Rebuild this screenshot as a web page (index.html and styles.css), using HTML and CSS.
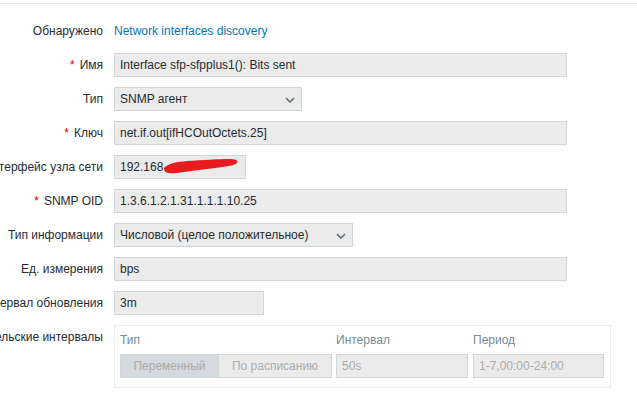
FILE: index.html
```html
<!DOCTYPE html>
<html lang="ru">
<head>
    <meta charset="UTF-8">
    <title>Элемент данных</title>
    <link rel="stylesheet" href="styles.css">
</head>
<body>
    <div class="topbar"></div>
    <div class="form">
        <div class="label">Обнаружено</div>
        <div class="value"><a class="link" href="#">Network interfaces discovery</a></div>

        <div class="label"><span class="req">*</span>Имя</div>
        <div class="value"><div class="field wide">Interface sfp-sfpplus1(): Bits sent</div></div>

        <div class="label">Тип</div>
        <div class="value">
            <div class="field select type-select">SNMP агент
                <svg class="chevron" width="10" height="6" viewBox="0 0 10 6"><path d="M1 1 L5 5 L9 1" fill="none" stroke="#5d6d77" stroke-width="1.6"/></svg>
            </div>
        </div>

        <div class="label"><span class="req">*</span>Ключ</div>
        <div class="value"><div class="field wide">net.if.out[ifHCOutOctets.25]</div></div>

        <div class="label">Интерфейс узла сети</div>
        <div class="value">
            <div class="field iface">192.168.
                <svg class="scribble" width="80" height="20" viewBox="0 0 80 20"><path d="M1 11 C6 6 14 5 24 4 C40 3 56 2 66 2 C72 2 76 3 74 6 C72 8 66 9 60 10 C44 12 28 14 14 16 C6 17 1 16 1 11 Z" fill="#e81c1f"/></svg>
            </div>
        </div>

        <div class="label"><span class="req">*</span>SNMP OID</div>
        <div class="value"><div class="field wide">1.3.6.1.2.1.31.1.1.1.10.25</div></div>

        <div class="label">Тип информации</div>
        <div class="value">
            <div class="field select info-select">Числовой (целое положительное)
                <svg class="chevron" width="10" height="6" viewBox="0 0 10 6"><path d="M1 1 L5 5 L9 1" fill="none" stroke="#5d6d77" stroke-width="1.6"/></svg>
            </div>
        </div>

        <div class="label">Ед. измерения</div>
        <div class="value"><div class="field wide">bps</div></div>

        <div class="label">Интервал обновления</div>
        <div class="value"><div class="field interval">3m</div></div>

        <div class="label">Пользовательские интервалы</div>
        <div class="value">
            <div class="intervals">
                <div class="col-head">Тип</div>
                <div class="col-head">Интервал</div>
                <div class="col-head">Период</div>
                <div class="toggle">
                    <span class="toggle-btn active">Переменный</span>
                    <span class="toggle-btn">По расписанию</span>
                </div>
                <div class="field disabled">50s</div>
                <div class="field disabled">1-7,00:00-24:00</div>
            </div>
        </div>
    </div>
</body>
</html>
```

FILE: styles.css
```css
body {
    margin: 0;
    font-family: 'Liberation Sans', Arial, sans-serif;
    font-size: 12px;
    color: #1f2c33;
    background-color: #fff;
    overflow: hidden;
}
.topbar {
    height: 3px;
    border-bottom: 1px solid #e6e6e6;
}
.form {
    display: grid;
    grid-template-columns: 103px 1fr;
    column-gap: 11px;
    row-gap: 10px;
    padding-top: 15px;
}
.label {
    display: flex;
    justify-content: flex-end;
    align-items: center;
    height: 24px;
    white-space: nowrap;
}
.req {
    color: #d40000;
    margin-right: 5px;
}
.value {
    display: flex;
    align-items: center;
    min-height: 24px;
}
.link {
    color: #0275b8;
    text-decoration: none;
}
.field {
    box-sizing: border-box;
    height: 24px;
    line-height: 22px;
    padding: 0 5px;
    background-color: #ebebeb;
    border: 1px solid #d0d7db;
    white-space: nowrap;
    position: relative;
}
.wide {
    width: 453px;
}
.type-select {
    width: 188px;
}
.info-select {
    width: 239px;
}
.iface {
    width: 132px;
}
.interval {
    width: 150px;
}
.chevron {
    position: absolute;
    right: 6px;
    top: 9px;
}
.scribble {
    position: absolute;
    left: 48px;
    top: 1px;
}
.intervals {
    box-sizing: border-box;
    width: 497px;
    height: 63px;
    border: 1px solid #ebebeb;
    padding: 6px 5px 10px 5px;
    display: grid;
    grid-template-columns: 212px 132px 132px;
    column-gap: 4px;
    row-gap: 6px;
}
.intervals .col-head:nth-child(3),
.intervals .field:last-child {
    margin-left: 1px;
}
.col-head {
    color: #768d99;
    line-height: 16px;
}
.toggle {
    display: flex;
    height: 24px;
}
.toggle-btn {
    box-sizing: border-box;
    height: 24px;
    line-height: 22px;
    text-align: center;
    color: #acacac;
    background-color: #ebebeb;
    border: 1px solid #d0d7db;
}
.toggle-btn:first-child {
    width: 99px;
}
.toggle-btn:last-child {
    width: 113px;
    border-left: none;
}
.toggle-btn.active {
    background-color: #d4dade;
}
.disabled {
    color: #acacac;
}
```
